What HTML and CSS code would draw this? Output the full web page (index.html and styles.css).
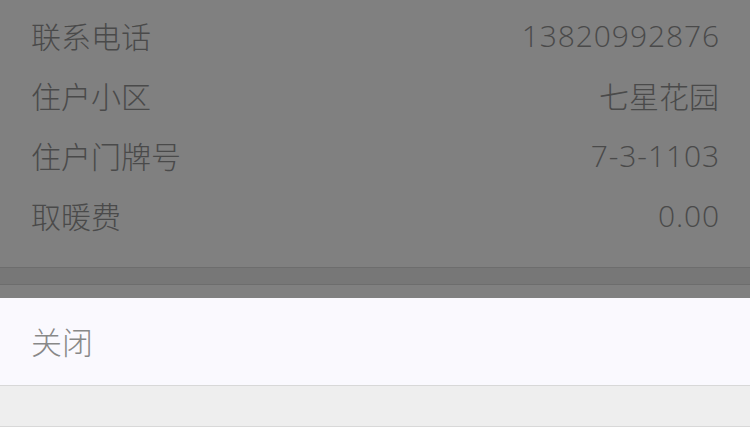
FILE: index.html
```html
<!DOCTYPE html>
<html lang="zh-CN">
<head>
<meta charset="utf-8">
<title>详情</title>
<link rel="stylesheet" href="styles.css">
</head>
<body>
<div class="screen">
  <div class="backdrop">
    <div class="list">
      <div class="row"><span class="label">联系电话</span><span class="value num">13820992876</span></div>
      <div class="row"><span class="label">住户小区</span><span class="value">七星花园</span></div>
      <div class="row"><span class="label">住户门牌号</span><span class="value num">7-3-1103</span></div>
      <div class="row"><span class="label">取暖费</span><span class="value num">0.00</span></div>
    </div>
    <div class="band"></div>
    <div class="gap"></div>
  </div>
  <div class="sheet"><span class="close">关闭</span></div>
  <div class="footer"></div>
</div>
</body>
</html>
```
FILE: styles.css
```css
html, body {
  margin: 0;
  padding: 0;
  background: #ffffff;
}
.screen {
  width: 750px;
  height: 430px;
  overflow: hidden;
  font-family: "Noto Sans CJK SC", "Noto Sans", sans-serif;
  font-weight: 300;
}
.backdrop {
  background: #808080;
  padding-top: 5px;
}
.list {
  padding: 0 31px 22px 31px;
}
.row {
  height: 60px;
  display: flex;
  justify-content: space-between;
  align-items: center;
  font-size: 30px;
  color: #4a4a4a;
}
.num {
  font-family: "Open Sans", "Noto Sans", sans-serif;
  font-weight: 300;
  letter-spacing: 0.9px;
  margin-right: -1px;
}
.band {
  height: 16px;
  background: #777777;
  border-top: 1px solid #6d6d6d;
  border-bottom: 1px solid #6d6d6d;
}
.gap {
  height: 13px;
}
.sheet {
  height: 87px;
  background: #faf9fe;
  display: flex;
  align-items: center;
  padding-left: 31px;
  padding-bottom: 3px;
  box-sizing: border-box;
}
.close {
  font-size: 31px;
  color: #888888;
}
.footer {
  height: 40px;
  background: #eeeeee;
  border-top: 1px solid #d8d8d8;
  border-bottom: 1px solid #d8d8d8;
}
```
